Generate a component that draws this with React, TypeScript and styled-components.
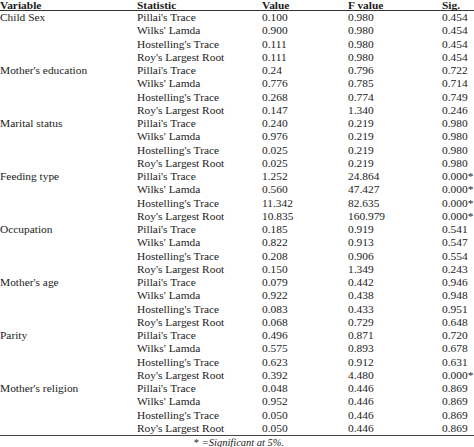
import { createGlobalStyle } from 'styled-components';
import styled from 'styled-components';

type Stat = [string, string, string, string];

const groups: { name: string; rows: Stat[] }[] = [
	{ name: 'Child Sex', rows: [
		["Pillai's Trace", '0.100', '0.980', '0.454'],
		["Wilks' Lamda", '0.900', '0.980', '0.454'],
		["Hostelling's Trace", '0.111', '0.980', '0.454'],
		["Roy's Largest Root", '0.111', '0.980', '0.454'],
	]},
	{ name: "Mother's education", rows: [
		["Pillai's Trace", '0.24', '0.796', '0.722'],
		["Wilks' Lamda", '0.776', '0.785', '0.714'],
		["Hostelling's Trace", '0.268', '0.774', '0.749'],
		["Roy's Largest Root", '0.147', '1.340', '0.246'],
	]},
	{ name: 'Marital status', rows: [
		["Pillai's Trace", '0.240', '0.219', '0.980'],
		["Wilks' Lamda", '0.976', '0.219', '0.980'],
		["Hostelling's Trace", '0.025', '0.219', '0.980'],
		["Roy's Largest Root", '0.025', '0.219', '0.980'],
	]},
	{ name: 'Feeding type', rows: [
		["Pillai's Trace", '1.252', '24.864', '0.000*'],
		["Wilks' Lamda", '0.560', '47.427', '0.000*'],
		["Hostelling's Trace", '11.342', '82.635', '0.000*'],
		["Roy's Largest Root", '10.835', '160.979', '0.000*'],
	]},
	{ name: 'Occupation', rows: [
		["Pillai's Trace", '0.185', '0.919', '0.541'],
		["Wilks' Lamda", '0.822', '0.913', '0.547'],
		["Hostelling's Trace", '0.208', '0.906', '0.554'],
		["Roy's Largest Root", '0.150', '1.349', '0.243'],
	]},
	{ name: "Mother's age", rows: [
		["Pillai's Trace", '0.079', '0.442', '0.946'],
		["Wilks' Lamda", '0.922', '0.438', '0.948'],
		["Hostelling's Trace", '0.083', '0.433', '0.951'],
		["Roy's Largest Root", '0.068', '0.729', '0.648'],
	]},
	{ name: 'Parity', rows: [
		["Pillai's Trace", '0.496', '0.871', '0.720'],
		["Wilks' Lamda", '0.575', '0.893', '0.678'],
		["Hostelling's Trace", '0.623', '0.912', '0.631'],
		["Roy's Largest Root", '0.392', '4.480', '0.000*'],
	]},
	{ name: "Mother's religion", rows: [
		["Pillai's Trace", '0.048', '0.446', '0.869'],
		["Wilks' Lamda", '0.952', '0.446', '0.869'],
		["Hostelling's Trace", '0.050', '0.446', '0.869'],
		["Roy's Largest Root", '0.050', '0.446', '0.869'],
	]},
];

const GlobalStyle = createGlobalStyle`
	body {
		margin: 0;
		background: #fff;
		font-family: 'Liberation Serif', 'Times New Roman', serif;
		color: #1c1c1c;
	}
`;

const Page = styled.div`
	width: 474px;
	height: 447px;
	overflow: hidden;
	background: #fff;
`;

const Table = styled.div`
	display: grid;
	grid-template-columns: 137px 125px 86px 94px auto;
	font-size: 11.4px;
	white-space: nowrap;
`;

const Head = styled.div`
	font-weight: 700;
	line-height: 10px;
	height: 10px;
	border-bottom: 1.5px solid #333;
`;

const Cell = styled.div<{ $last?: boolean }>`
	line-height: 13.25px;
	height: 13.25px;
	border-bottom: ${({ $last }) => ($last ? '1px solid #444' : 'none')};
`;

const Note = styled.div`
	text-align: center;
	font-size: 10.5px;
	line-height: 13px;
	padding-left: 4px;
	i {
		font-style: italic;
	}
`;

const App = () => {
	const total = groups.length * 4;
	let n = 0;
	return (
		<Page>
			<GlobalStyle />
			<Table>
				<Head>Variable</Head>
				<Head>Statistic</Head>
				<Head>Value</Head>
				<Head>F value</Head>
				<Head>Sig.</Head>
				{groups.map((g) =>
					g.rows.map((r, i) => {
						n++;
						const last = n === total;
						return [
							<Cell key={g.name + i + 'v'} $last={last}>{i === 0 ? g.name : ''}</Cell>,
							...r.map((c, j) => (
								<Cell key={g.name + i + '-' + j} $last={last}>{c}</Cell>
							)),
						];
					})
				)}
			</Table>
			<Note>* <i>=Significant at 5%.</i></Note>
		</Page>
	);
};

export default App;
